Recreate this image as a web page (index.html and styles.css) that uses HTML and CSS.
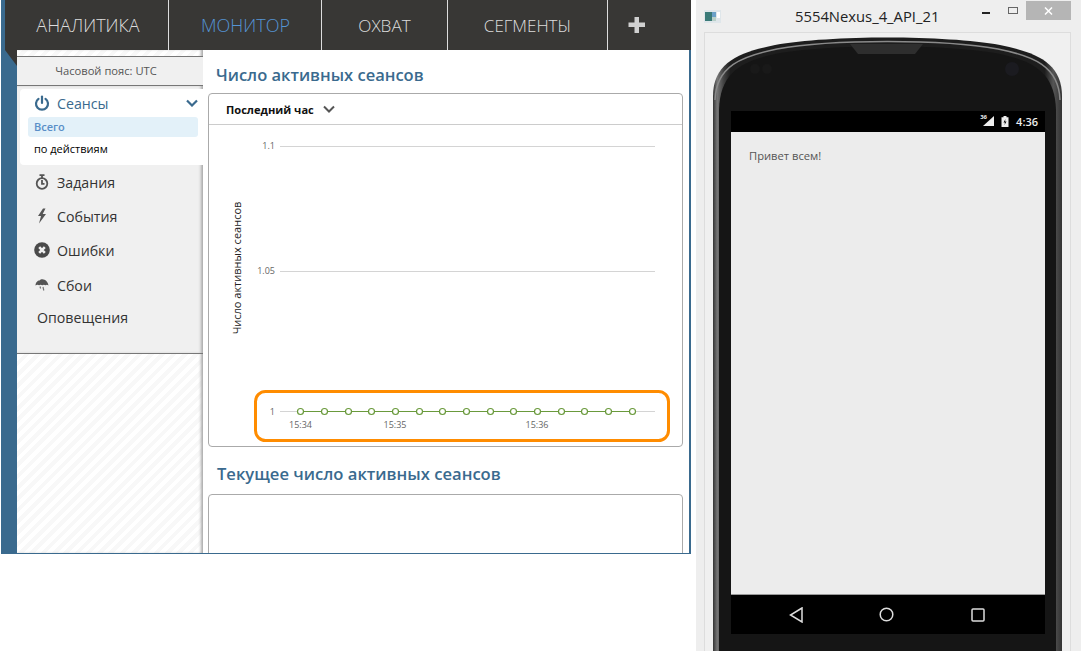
FILE: index.html
```html
<!DOCTYPE html>
<html lang="ru">
<head>
	<meta charset="UTF-8">
	<title>Монитор</title>
	<link rel="stylesheet" href="styles.css">
</head>
<body>
	<div class="page">
		<div class="console">
			<div class="tabs">
				<div class="tab tab-analytics">АНАЛИТИКА</div>
				<div class="tab tab-monitor active">МОНИТОР</div>
				<div class="tab tab-reach">ОХВАТ</div>
				<div class="tab tab-segments">СЕГМЕНТЫ</div>
				<div class="tab tab-plus">
					<svg width="18" height="16" viewBox="0 0 18 16"><path d="M6.500 0h4.500v5.500h6v4.500h-6v6h-4.500v-6h-6v-4.500h6z" fill="#d0d0d0"/></svg>
				</div>
			</div>
			<div class="main">
				<div class="fold"></div>
				<div class="sidebar">
					<div class="timezone">Часовой пояс: UTC</div>
					<div class="menu">
						<div class="group">
							<div class="group-head">
								<svg class="icon" width="16" height="16" viewBox="0 0 16 16" fill="none" stroke="#3a6a8e" stroke-width="2.200" stroke-linecap="round"><path d="M4.500 3.800a6 6 0 1 0 7 0"/><path d="M8 1.500v6.500"/></svg>
								<span>Сеансы</span>
								<svg class="chevron" width="12" height="8" viewBox="0 0 12 8" fill="none" stroke="#3a6a8e" stroke-width="2.200"><path d="M1 1.500l5 5 5-5"/></svg>
							</div>
							<div class="sub sub-active">Всего</div>
							<div class="sub">по действиям</div>
						</div>
						<div class="item">
							<svg class="icon" width="16" height="16" viewBox="0 0 16 16" fill="none" stroke="#555" stroke-width="1.800"><circle cx="8" cy="9.500" r="5.300"/><path d="M5.500 1.200h5M8 1.500v2.500M8 6v3.800h2.500"/></svg>
							<span>Задания</span>
						</div>
						<div class="item">
							<svg class="icon" width="16" height="16" viewBox="0 0 16 16"><path d="M9 0.500l-5 7.500h3l-2 7.500 7-9.500h-3.300l2.800-5.500z" fill="#555"/></svg>
							<span>События</span>
						</div>
						<div class="item">
							<svg class="icon" width="16" height="16" viewBox="0 0 16 16"><circle cx="8" cy="8" r="7.800" fill="#4a4a4a"/><path d="M5.200 5.200l5.600 5.600M10.800 5.200l-5.600 5.600" stroke="#f0f0f0" stroke-width="2.600"/></svg>
							<span>Ошибки</span>
						</div>
						<div class="item item-crash">
							<svg class="icon" width="16" height="16" viewBox="0 0 16 16"><path d="M1.500 9.500c0-3 2.200-5 4-5 .8-1 2-1.500 3-1.300 2.800 .3 5.500 2.500 6 6.300-1.200-1-2-1-3-.2-1-.8-2.200-.8-3.200 0-1-.8-2.200-.8-3.200 0-1-.8-2.400-.8-3.600 .2z" fill="#555"/><path d="M6 10.500l.6 2M9 11l.8 3.500" stroke="#777" stroke-width="1.200"/></svg>
							<span>Сбои</span>
						</div>
						<div class="item item-plain"><span>Оповещения</span></div>
					</div>
				</div>
				<div class="content">
					<h2 class="title">Число активных сеансов</h2>
					<div class="card card-chart">
						<div class="card-head">
							<span>Последний час</span>
							<svg width="12" height="8" viewBox="0 0 12 8" fill="none" stroke="#555" stroke-width="2"><path d="M1 1.500l5 5 5-5"/></svg>
						</div>
						<svg class="chart" width="473" height="321" viewBox="209 125 473 321">
							<g stroke="#d4d4d4" stroke-width="1">
								<path d="M280 146.500h375"/>
								<path d="M280 271.500h375"/>
								<path d="M280 411.500h375"/>
							</g>
							<g class="tick" text-anchor="end">
								<text x="275" y="149">1.1</text>
								<text x="275" y="274">1.05</text>
								<text x="275" y="415">1</text>
							</g>
							<text class="axis" transform="translate(241 268) rotate(-90)" text-anchor="middle">Число активных сеансов</text>
							<path d="M300 411.500h333" stroke="#6a9a3c" stroke-width="1"/>
							<g fill="#fff" stroke="#6a9a3c" stroke-width="1.200">
								<circle cx="300.500" cy="411.500" r="3"/>
								<circle cx="324.500" cy="411.500" r="3"/>
								<circle cx="348.500" cy="411.500" r="3"/>
								<circle cx="371.500" cy="411.500" r="3"/>
								<circle cx="395.500" cy="411.500" r="3"/>
								<circle cx="419.500" cy="411.500" r="3"/>
								<circle cx="442.500" cy="411.500" r="3"/>
								<circle cx="466.500" cy="411.500" r="3"/>
								<circle cx="490.500" cy="411.500" r="3"/>
								<circle cx="513.500" cy="411.500" r="3"/>
								<circle cx="537.500" cy="411.500" r="3"/>
								<circle cx="561.500" cy="411.500" r="3"/>
								<circle cx="584.500" cy="411.500" r="3"/>
								<circle cx="608.500" cy="411.500" r="3"/>
								<circle cx="632.500" cy="411.500" r="3"/>
							</g>
							<g class="tick" text-anchor="middle">
								<text x="300.500" y="427.500">15:34</text>
								<text x="395" y="427.500">15:35</text>
								<text x="537" y="427.500">15:36</text>
							</g>
							<rect x="255.500" y="391.500" width="413" height="49" rx="10" fill="none" stroke="#ff8c00" stroke-width="3"/>
						</svg>
					</div>
					<h2 class="title title-second">Текущее число активных сеансов</h2>
					<div class="card card-empty"></div>
				</div>
			</div>
		</div>

		<div class="emulator">
			<div class="titlebar">
				<svg class="app-icon" width="17" height="13" viewBox="0 0 17 13"><rect width="17" height="13" fill="#dfe6ea"/><rect x="1" y="2" width="7" height="9" fill="#3a7a78"/><rect x="8" y="2" width="4" height="5" fill="#6aa0c8"/><rect x="8" y="7" width="4" height="4" fill="#b8d0c8"/><rect x="13" y="2" width="3" height="6" fill="#fff"/></svg>
				<div class="window-title">5554Nexus_4_API_21</div>
				<div class="window-buttons">
					<div class="btn-min"></div>
					<div class="btn-max"></div>
					<div class="btn-close">
						<svg width="9" height="8" viewBox="0 0 9 8" stroke="#fff" stroke-width="1.500"><path d="M1 .5l7 7M8 .5l-7 7"/></svg>
					</div>
				</div>
			</div>
			<div class="frame">
				<svg class="device" width="367" height="619" viewBox="704 32 367 619">
					<defs>
						<linearGradient id="edge" x1="0" x2="1" y1="0" y2="0">
							<stop offset="0" stop-color="#333"/>
							<stop offset=".012" stop-color="#777"/>
							<stop offset=".03" stop-color="#444"/>
							<stop offset=".05" stop-color="#1d1d1d"/>
							<stop offset=".95" stop-color="#1d1d1d"/>
							<stop offset=".975" stop-color="#555"/>
							<stop offset="1" stop-color="#333"/>
						</linearGradient>
					</defs>
					<path d="M713 660V96C713 62 740 52 775 45C830 35 945 35 1000 45C1035 52 1062 62 1062 96V660z" fill="url(#edge)"/>
					<path d="M715 100C716 66 742 56 777 49C832 39 943 39 998 49C1033 56 1059 66 1060 100" fill="none" stroke="#8a8a8a" stroke-width="1.500"/>
					<path d="M719 110C720 70 745 60 780 53C835 44 940 44 995 53C1030 60 1055 70 1056 110V660H719z" fill="#151515"/>
					<path d="M850 44H923L915 54H858z" fill="#2e2e2e"/>
					<circle cx="755" cy="69" r="5" fill="#191919"/>
					<circle cx="767" cy="69" r="5" fill="#191919"/>
					<circle cx="1012" cy="69" r="7" fill="#1b1b20"/>
				</svg>
				<div class="screen">
					<div class="statusbar">
						<span class="signal">36</span>
						<svg width="15" height="11" viewBox="0 0 15 11"><path d="M14 0v10H3z" fill="#eee"/></svg>
						<svg class="battery" width="8" height="11" viewBox="0 0 8 11"><path d="M2.500 0h3v1.300h2V11H.500V1.300h2z" fill="#eee"/><path d="M4.500 3L2.500 6.500h1.500l-.5 2.500 2-3.500H4z" fill="#000"/></svg>
						<span class="clock">4:36</span>
					</div>
					<div class="app-area">Привет всем!</div>
					<div class="navbar">
						<svg width="14" height="16" viewBox="0 0 14 16" fill="none" stroke="#ddd" stroke-width="1.500"><path d="M13 1L1.500 8 13 15z"/></svg>
						<svg width="15" height="15" viewBox="0 0 15 15" fill="none" stroke="#ddd" stroke-width="1.500"><circle cx="7.500" cy="7.500" r="6.300"/></svg>
						<svg width="14" height="14" viewBox="0 0 14 14" fill="none" stroke="#ddd" stroke-width="1.500"><rect x="1" y="1" width="12" height="12" rx="1"/></svg>
					</div>
				</div>
			</div>
		</div>
	</div>
</body>
</html>
```

FILE: styles.css
```css
*{
	margin:0;
	padding:0;
	box-sizing:border-box;
}
body{
	background:#fff;
	font-family:"Open Sans","Noto Sans",sans-serif;
	overflow:hidden;
}
.page{
	display:flex;
	width:1081px;
	height:651px;
	overflow:hidden;
}

/* left window */
.console{
	width:690px;
	height:554px;
	margin-left:1px;
	background:#3a6a8e;
	display:flex;
	flex-direction:column;
}
.tabs{
	display:flex;
	height:50px;
	margin-left:4px;
	background:#383735;
	flex-shrink:0;
}
.tab{
	display:flex;
	align-items:center;
	justify-content:center;
	height:100%;
	font-size:18px;
	font-weight:300;
	color:#ddd;
	border-right:1px solid #ddd;
}
.tab.active{
	color:#5594d4;
}
.tab-analytics{ width:164px; padding-left:3px; }
.tab-monitor{ width:153px; padding-left:1px; }
.tab-reach{ width:126px; font-size:17.200px; }
.tab-segments{ width:160px; font-size:17px; }
.tab-plus{ flex:1; border-right:0; padding-right:26px; }

.main{
	flex:1;
	display:flex;
	margin-left:16px;
	margin-right:2px;
	margin-bottom:1px;
	min-height:0;
	position:relative;
}
.fold{
	position:absolute;
	left:-12px;
	top:0;
	width:0;
	height:0;
	border-top:16px solid #383735;
	border-left:12px solid transparent;
}
.sidebar{
	width:186px;
	flex-shrink:0;
	padding-top:6px;
	background:repeating-linear-gradient(135deg,#fff 0,#fff 4px,#f8f8f8 4px,#f8f8f8 8px);
	position:relative;
	box-shadow:inset -3px 0 3px -1px #aaa;
}
.timezone{
	height:30px;
	padding-right:8px;
	background:#f0f0f0;
	border-top:1px solid #777;
	border-bottom:1px solid #777;
	font-size:11.200px;
	line-height:28px;
	text-align:center;
	color:#555;
}
.menu{
	height:268px;
	padding-top:3px;
	background:#f0f0f0;
	border-bottom:1px solid #777;
	box-shadow:inset -3px 0 3px -1px #aaa;
}
.group{
	margin-left:3px;
	margin-right:-1px;
	height:76px;
	padding:0 6px 0 8px;
	background:#fff;
	border-radius:4px 0 0 4px;
}
.group-head{
	display:flex;
	align-items:center;
	height:28px;
	padding-left:6px;
	font-size:14.200px;
	color:#3a6a8e;
}
.group-head .icon{
	margin-right:7px;
}
.chevron{
	margin-left:auto;
}
.sub{
	height:20px;
	padding-left:6px;
	font-size:11px;
	line-height:20px;
	color:#000;
}
.sub-active{
	background:#e3f1f9;
	border-radius:3px;
	font-weight:600;
	color:#5a8fc8;
	margin-bottom:2px;
}
.item{
	display:flex;
	align-items:center;
	height:34px;
	padding-left:17px;
	font-size:14.200px;
	color:#333;
}
.item .icon{
	margin-right:7px;
}
.item-crash span{
	padding-top:2px;
}
.item-plain{
	padding-left:20px;
	height:32px;
}

.content{
	flex:1;
	min-width:0;
	background:#fff;
	padding:0 6px 0 5px;
	overflow:hidden;
}
.title{
	height:43px;
	padding:15px 0 0 8px;
	font-size:16.500px;
	line-height:20px;
	font-weight:600;
	color:#3a6a8e;
}
.title-second{
	height:47px;
	padding:17px 0 0 9px;
	font-size:16.600px;
}
.card{
	border:1px solid #aaa;
	border-radius:4px;
}
.card-chart{
	height:354px;
}
.card-empty{
	height:120px;
}
.card-head{
	display:flex;
	align-items:center;
	gap:9px;
	height:31px;
	padding-left:17px;
	border-bottom:1px solid #ccc;
	font-size:11.100px;
	font-weight:700;
	color:#111;
}
.chart{
	display:block;
}
.tick text{
	font-size:9px;
	fill:#666;
}
.axis{
	font-size:11px;
	fill:#222;
}

/* right window */
.emulator{
	width:385px;
	margin-left:5px;
	background:#eee;
	flex-shrink:0;
}
.titlebar{
	display:flex;
	align-items:center;
	height:32px;
	padding-left:8px;
	position:relative;
}
.window-title{
	flex:1;
	padding-left:74px;
	font-size:14.800px;
	color:#222;
}
.window-buttons{
	display:flex;
	align-items:flex-start;
	align-self:flex-start;
	margin-right:10px;
}
.btn-min{
	width:8px;
	height:2px;
	margin-top:12px;
	background:#222;
	margin-right:18px;
}
.btn-max{
	width:10px;
	height:7px;
	margin-top:7px;
	border:1px solid #666;
	margin-right:8px;
}
.btn-close{
	display:flex;
	align-items:center;
	justify-content:center;
	width:45px;
	height:19px;
	margin-top:1px;
	background:#b5b5b5;
}
.frame{
	width:367px;
	height:619px;
	margin-left:8px;
	background:#f0f0f0;
	border:1px solid #ddd;
	border-bottom:0;
	position:relative;
}
.device{
	position:absolute;
	left:-1px;
	top:-1px;
}
.screen{
	position:absolute;
	left:26px;
	top:78px;
	width:314px;
	height:523px;
	display:flex;
	flex-direction:column;
}
.statusbar{
	display:flex;
	align-items:center;
	justify-content:flex-end;
	gap:6px;
	height:21px;
	padding-right:7px;
	background:#000;
	position:relative;
}
.signal{
	position:absolute;
	right:58px;
	top:3px;
	font-size:6px;
	line-height:7px;
	font-weight:700;
	color:#eee;
}
.battery{
	margin-right:1px;
}
.clock{
	font-size:11px;
	font-weight:600;
	color:#eee;
}
.app-area{
	height:463px;
	background:#ececec;
	border-bottom:1px solid #999;
	padding:16px 18px;
	font-size:11.200px;
	line-height:15px;
	color:#555;
}
.navbar{
	flex:1;
	display:flex;
	align-items:center;
	justify-content:space-around;
	padding:0 22px 0 20px;
	background:#000;
}
```
